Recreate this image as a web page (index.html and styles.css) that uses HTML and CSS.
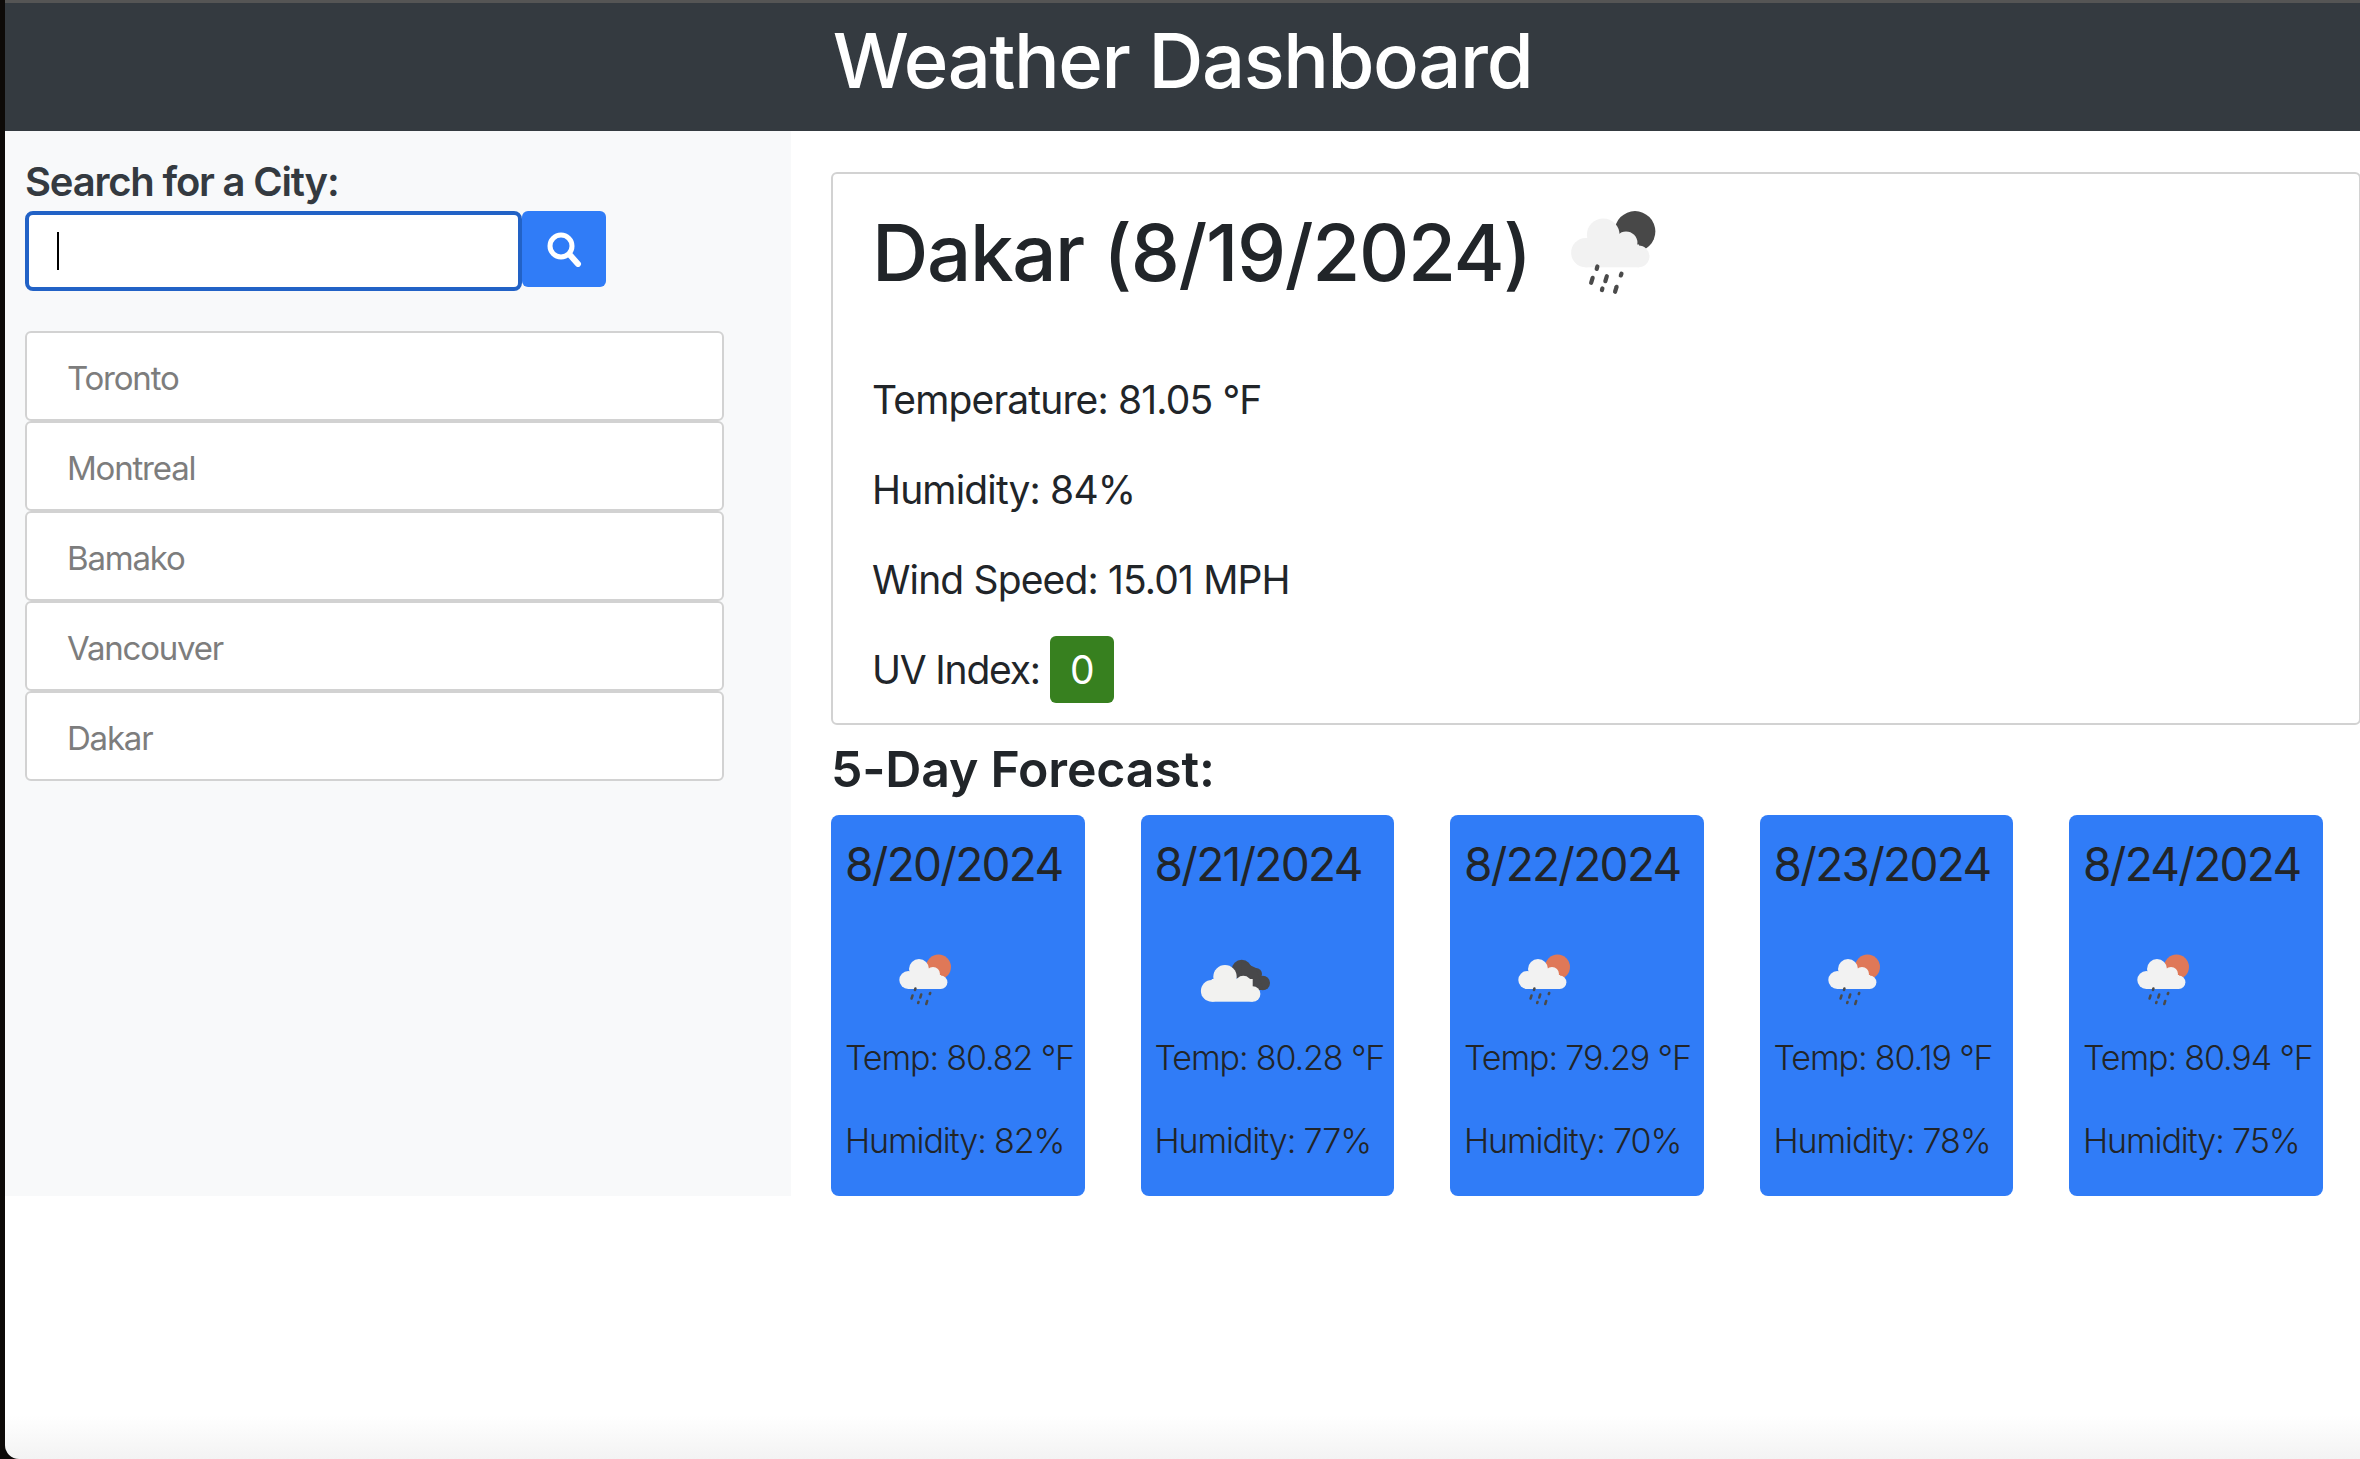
FILE: index.html
```html
<!DOCTYPE html>
<html lang="en">
<head>
  <meta charset="UTF-8" />
  <title>Weather Dashboard</title>
  <link rel="stylesheet" href="styles.css">
</head>
<body>
  <div class="window">
    <header class="topbar">
      <h1>Weather Dashboard</h1>
    </header>

    <div class="content">
      <aside class="sidebar">
        <label class="search-label" for="city">Search for a City:</label>
        <form class="search-form">
          <div class="search-field">
            <input id="city" class="search-input" type="text" />
            <span class="caret"></span>
          </div>
          <button class="search-btn" type="button" aria-label="Search">
            <svg width="36" height="36" viewBox="0 0 36 36">
              <circle cx="15" cy="15" r="11" fill="none" stroke="#fff" stroke-width="5" />
              <line x1="24" y1="24" x2="32" y2="33" stroke="#fff" stroke-width="6" stroke-linecap="round" />
            </svg>
          </button>
        </form>
        <ul class="history">
          <li>Toronto</li>
          <li>Montreal</li>
          <li>Bamako</li>
          <li>Vancouver</li>
          <li>Dakar</li>
        </ul>
      </aside>

      <main class="main">
        <section class="today">
          <div class="today-title">
            <h2>Dakar (8/19/2024)</h2>
            <svg class="today-icon" viewBox="0 0 70 60">
              <defs>
                <g id="rain">
                  <circle cx="48.5" cy="18" r="12.5" fill="currentColor" />
                  <g fill="#f2f2f2">
                    <circle cx="18.3" cy="31" r="9" />
                    <circle cx="29" cy="20" r="10" />
                    <circle cx="43" cy="25" r="7" />
                    <circle cx="50.7" cy="33.3" r="6.7" />
                    <rect x="18" y="26" width="33" height="14" />
                  </g>
                  <g stroke="#4a4a4a" stroke-width="2.6" stroke-linecap="round">
                    <line x1="25.4" y1="39.5" x2="25" y2="41" />
                    <line x1="22.5" y1="46.5" x2="21.6" y2="49.5" />
                    <line x1="31.2" y1="45.5" x2="30.3" y2="48.5" />
                    <line x1="40.2" y1="44" x2="39.8" y2="45" />
                    <line x1="28.5" y1="53" x2="28.2" y2="54" />
                    <line x1="37.2" y1="52" x2="36.3" y2="55" />
                  </g>
                </g>
                <g id="clouds">
                  <g fill="#48484a">
                    <circle cx="46.7" cy="20.7" r="10" />
                    <circle cx="61" cy="25" r="6" />
                    <circle cx="67.7" cy="34" r="7.3" />
                    <polygon points="46,12 61,19 68,41 48,41" />
                  </g>
                  <g fill="#f2f2f0">
                    <circle cx="16.7" cy="41.9" r="10.8" />
                    <circle cx="30" cy="27.7" r="11.7" />
                    <circle cx="48.3" cy="35" r="8.3" />
                    <circle cx="57.7" cy="45" r="7.7" />
                    <rect x="16.7" y="30" width="41" height="22.7" />
                  </g>
                </g>
              </defs>
              <use href="#rain" />
            </svg>
          </div>
          <p>Temperature: 81.05 °F</p>
          <p>Humidity: 84%</p>
          <p>Wind Speed: 15.01 MPH</p>
          <p class="uv-row"><span class="uv-label">UV Index:</span> <span class="uv-badge">0</span></p>
        </section>

        <h3 class="forecast-title">5-Day Forecast:</h3>
        <div class="forecast">
          <article class="day">
            <h4>8/20/2024</h4>
            <svg class="day-icon sun" viewBox="0 0 100 75"><use href="#rain" x="45" y="15" /></svg>
            <p>Temp: 80.82 °F</p>
            <p>Humidity: 82%</p>
          </article>
          <article class="day">
            <h4>8/21/2024</h4>
            <svg class="day-icon" viewBox="0 0 100 75"><use href="#clouds" x="40" y="15" /></svg>
            <p>Temp: 80.28 °F</p>
            <p>Humidity: 77%</p>
          </article>
          <article class="day">
            <h4>8/22/2024</h4>
            <svg class="day-icon sun" viewBox="0 0 100 75"><use href="#rain" x="45" y="15" /></svg>
            <p>Temp: 79.29 °F</p>
            <p>Humidity: 70%</p>
          </article>
          <article class="day">
            <h4>8/23/2024</h4>
            <svg class="day-icon sun" viewBox="0 0 100 75"><use href="#rain" x="45" y="15" /></svg>
            <p>Temp: 80.19 °F</p>
            <p>Humidity: 78%</p>
          </article>
          <article class="day">
            <h4>8/24/2024</h4>
            <svg class="day-icon sun" viewBox="0 0 100 75"><use href="#rain" x="45" y="15" /></svg>
            <p>Temp: 80.94 °F</p>
            <p>Humidity: 75%</p>
          </article>
        </div>
      </main>
    </div>
  </div>
</body>
</html>
```

FILE: styles.css
```css
* { box-sizing: border-box; }
html, body { height: 100%; }
body { margin: 0; background: #0d0a08; font-family: Inter, "Liberation Sans", sans-serif; color: #212529; overflow: hidden; }
h1, h2, h3, h4, p, ul { margin: 0; padding: 0; }

.window { height: 100%; margin-left: 5px; border-bottom-left-radius: 14px; overflow: hidden; background: linear-gradient(to bottom, #fff 97%, #f3f3f3 100%); }

.topbar { height: 131px; background: #343a40; border-top: 3px solid #555; color: #fff; text-align: center; }
.topbar h1 { font-size: 76px; font-weight: 500; letter-spacing: -1.4px; line-height: 114px; }

.content { display: grid; grid-template-columns: 786px 1fr; }

.sidebar { background: #f8f9fa; padding: 22px 20px 0 20px; }
.search-label { display: block; font-size: 40px; font-weight: 600; letter-spacing: -1.2px; line-height: 58px; color: #343a40; }
.search-form { display: flex; align-items: flex-start; }
.search-field { position: relative; }
.search-input { display: block; width: 497px; height: 80px; border: 4px solid #2262c6; border-radius: 8px; background: #fff; outline: none; }
.caret { position: absolute; left: 32px; top: 21px; width: 2px; height: 38px; background: #000; }
.search-btn { width: 84px; height: 76px; border: none; border-radius: 6px; background: #307cf7; display: flex; align-items: center; justify-content: center; padding: 0; }

.history { list-style: none; width: 699px; margin-top: 40px; }
.history li { height: 90px; border: 2px solid #d2d2d2; border-radius: 6px; background: #fff; padding-left: 40px; font-size: 33px; letter-spacing: -1.2px; line-height: 90px; color: #7d7d7d; }

.main { padding: 41px 0 0 40px; }

.today { height: 553px; margin-right: -1px; border: 2px solid #d2d2d2; border-radius: 6px; padding: 0 0 0 39px; }
.today-title { display: flex; align-items: flex-start; height: 181px; }
.today-title h2 { font-size: 78px; font-weight: 500; letter-spacing: -1.35px; line-height: 158px; white-space: nowrap; }
.today-icon { width: 114px; height: 98px; margin: 28px 0 0 25px; color: #484848; }
.today p { font-size: 39px; letter-spacing: -0.85px; line-height: 90px; }
.uv-row { display: flex; align-items: center; gap: 10px; }
.uv-label { letter-spacing: -1.2px; }
.uv-badge { display: inline-block; width: 64px; height: 67px; margin-top: -1px; border-radius: 6px; background: #37801f; color: #fff; text-align: center; line-height: 67px; }

.forecast-title { font-size: 50px; font-weight: 600; letter-spacing: -0.2px; line-height: 88px; }

.forecast { display: grid; grid-template-columns: repeat(5, 253.5px); column-gap: 56px; padding-top: 2px; }
.day { height: 381px; background: #307cf7; border-radius: 8px; padding: 0 0 0 14px; }
.day h4 { font-size: 46px; font-weight: 400; letter-spacing: -1.7px; line-height: 98px; white-space: nowrap; }
.day-icon { display: block; width: 100px; height: 75px; margin: 21px 0 7px; overflow: visible; }
.sun { color: #df7858; }
.day p { font-size: 34px; font-weight: 300; letter-spacing: -1.1px; line-height: 83px; white-space: nowrap; }
```
